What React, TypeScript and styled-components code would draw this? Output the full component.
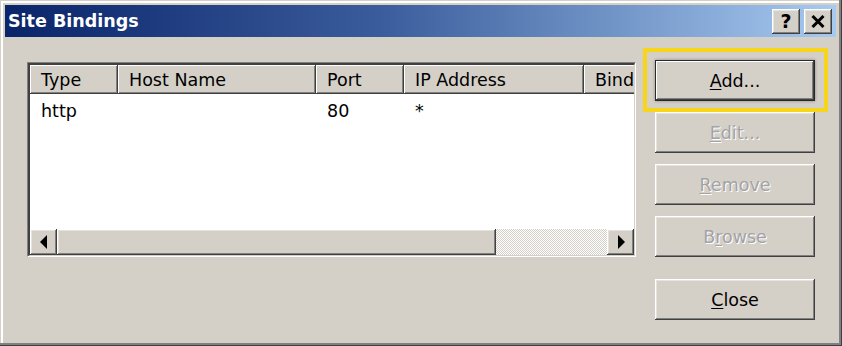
import React from 'react';
import styled, { createGlobalStyle, css } from 'styled-components';

const Global = createGlobalStyle`
  html, body { margin: 0; padding: 0; width: 842px; height: 346px; overflow: hidden; background: #d4d0c8; }
  #root { width: 842px; height: 346px; }
`;

const FONT = `"DejaVu Sans", Tahoma, Verdana, sans-serif`;

const raised = css`
  box-shadow: inset -1px -1px 0 #404040, inset 1px 1px 0 #ffffff, inset -2px -2px 0 #808080, inset 2px 2px 0 #e6e3dc;
`;

const Window = styled.div`
  box-sizing: border-box;
  width: 842px;
  height: 346px;
  background: #d4d0c8;
  padding: 5px 6px 6px 5px;
  display: flex;
  flex-direction: column;
  font-family: ${FONT};
  box-shadow: inset -1px -1px 0 #404040, inset -3px -3px 0 #808080, inset 1px 1px 0 #d4d0c8, inset 3px 3px 0 #ffffff;
`;

const TitleBar = styled.div`
  height: 32px;
  flex-shrink: 0;
  display: flex;
  align-items: center;
  justify-content: space-between;
  padding: 0 4px 0 3px;
  background: linear-gradient(to right, #0a246a 0%, #3a5c9c 45%, #a6caf0 100%);
`;

const Title = styled.span`
  color: #ffffff;
  font-weight: bold;
  font-size: 17.5px;
`;

const CaptionButtons = styled.div`
  display: flex;
  gap: 4px;
`;

const CaptionButton = styled.div`
  width: 28px;
  height: 25px;
  background: #d4d0c8;
  display: flex;
  align-items: center;
  justify-content: center;
  color: #000;
  font-weight: bold;
  font-size: 19px;
  ${raised}
`;

const Body = styled.div`
  flex: 1;
  display: flex;
  align-items: flex-start;
  gap: 19px;
  padding: 23px 21px 0 22px;
`;

const ListFrame = styled.div`
  box-sizing: border-box;
  width: 609px;
  height: 195px;
  margin-top: 2px;
  border-style: solid;
  border-width: 1px;
  border-color: #808080 #ffffff #ffffff #808080;
  display: flex;
`;

const ListInner = styled.div`
  flex: 1;
  display: flex;
  flex-direction: column;
  overflow: hidden;
  background: #ffffff;
  border-style: solid;
  border-width: 2px 1px 1px 2px;
  border-color: #404040 #d4d0c8 #d4d0c8 #404040;
`;

const HeaderRow = styled.div`
  display: flex;
  height: 29px;
  flex-shrink: 0;
  background: #d4d0c8;
`;

const HeaderCell = styled.div<{ $w: number }>`
  box-sizing: border-box;
  width: ${(p) => p.$w}px;
  flex-shrink: 0;
  padding-left: 11px;
  display: flex;
  align-items: center;
  font-size: 17.5px;
  color: #000;
  white-space: nowrap;
  overflow: hidden;
  box-shadow: inset -1px -1px 0 #404040, inset 1px 1px 0 #ffffff, inset -2px -2px 0 #808080;
`;

const Rows = styled.div`
  flex: 1;
  background: #ffffff;
`;

const Row = styled.div`
  display: flex;
  padding-top: 6px;
  height: 22px;
`;

const Cell = styled.div<{ $w: number }>`
  box-sizing: border-box;
  width: ${(p) => p.$w}px;
  flex-shrink: 0;
  padding-left: 11px;
  font-size: 17.5px;
  line-height: 22px;
  color: #000;
  white-space: nowrap;
`;

const ScrollBar = styled.div`
  display: flex;
  height: 26px;
  flex-shrink: 0;
`;

const ScrollButton = styled.div`
  width: 27px;
  flex-shrink: 0;
  background: #d4d0c8;
  display: flex;
  align-items: center;
  justify-content: center;
  ${raised}
`;

const Thumb = styled.div<{ $w: number }>`
  width: ${(p) => p.$w}px;
  flex-shrink: 0;
  background: #d4d0c8;
  ${raised}
`;

const Track = styled.div`
  flex: 1;
  background-color: #ffffff;
  background-image: repeating-conic-gradient(#d4d0c8 0% 25%, #ffffff 0% 50%);
  background-size: 2px 2px;
`;

const ButtonColumn = styled.div`
  width: 160px;
  display: flex;
  flex-direction: column;
  gap: 11px;
`;

const HighlightBox = styled.div`
  padding: 8px 9px 7px 8px;
  margin: -12px -13px -11px -12px;
  border: 4px solid #f6d51a;
  display: flex;
  flex-direction: column;
`;

const Button = styled.div<{ $disabled?: boolean; $default?: boolean; $gapAbove?: number }>`
  box-sizing: border-box;
  height: 41px;
  background: #d4d0c8;
  display: flex;
  align-items: center;
  justify-content: center;
  font-size: 17.5px;
  white-space: nowrap;
  color: ${(p) => (p.$disabled ? '#a3a2a6' : '#000')};
  text-shadow: ${(p) => (p.$disabled ? '1px 1px 0 #ffffff' : 'none')};
  margin-top: ${(p) => p.$gapAbove ?? 0}px;
  ${raised}
  ${(p) =>
    p.$default &&
    css`
      border: 1px solid #2a2a2a;
      box-shadow: inset -1px -1px 0 #404040, inset 1px 1px 0 #ffffff, inset -2px -2px 0 #808080, 0 0 3px rgba(0, 0, 0, 0.35);
    `}
`;

const Label = styled.span`
  display: inline-block;
  white-space: nowrap;
  &::first-letter {
    text-decoration: underline;
    text-decoration-thickness: 1px;
    text-underline-offset: 2px;
  }
`;

const AccessKey = styled.span`
  text-decoration: underline;
  text-decoration-thickness: 1px;
  text-underline-offset: 2px;
`;

const PlainLabel = styled.span`
  white-space: nowrap;
`;

const cols = [88, 198, 88, 180, 120];
const headers = ['Type', 'Host Name', 'Port', 'IP Address', 'Binding Information'];
const row = ['http', '', '80', '*', ''];

const Arrow = ({ dir }: { dir: 'left' | 'right' }) => (
  <svg width="8" height="14" viewBox="0 0 8 14">
    {dir === 'left' ? <polygon points="7,0 7,14 0,7" fill="#000" /> : <polygon points="1,0 1,14 8,7" fill="#000" />}
  </svg>
);

const CloseGlyph = () => (
  <svg width="14" height="13" viewBox="0 0 14 13">
    <path d="M1.5 1 L12.5 12 M12.5 1 L1.5 12" stroke="#000" strokeWidth="3" />
  </svg>
);

export default function App() {
  return (
    <>
      <Global />
      <Window>
        <TitleBar>
          <Title>Site Bindings</Title>
          <CaptionButtons>
            <CaptionButton>?</CaptionButton>
            <CaptionButton>
              <CloseGlyph />
            </CaptionButton>
          </CaptionButtons>
        </TitleBar>
        <Body>
          <ListFrame>
            <ListInner>
              <HeaderRow>
                {headers.map((h, i) => (
                  <HeaderCell key={h} $w={cols[i]}>
                    {h}
                  </HeaderCell>
                ))}
              </HeaderRow>
              <Rows>
                <Row>
                  {row.map((c, i) => (
                    <Cell key={i} $w={cols[i]}>
                      {c}
                    </Cell>
                  ))}
                </Row>
              </Rows>
              <ScrollBar>
                <ScrollButton>
                  <Arrow dir="left" />
                </ScrollButton>
                <Thumb $w={439} />
                <Track />
                <ScrollButton>
                  <Arrow dir="right" />
                </ScrollButton>
              </ScrollBar>
            </ListInner>
          </ListFrame>
          <ButtonColumn>
            <HighlightBox>
              <Button $default>
                <Label>Add...</Label>
              </Button>
            </HighlightBox>
            <Button $disabled>
              <Label>Edit...</Label>
            </Button>
            <Button $disabled>
              <Label>Remove</Label>
            </Button>
            <Button $disabled>
              <PlainLabel>B<AccessKey>r</AccessKey>owse</PlainLabel>
            </Button>
            <Button $gapAbove={11}>
              <Label>Close</Label>
            </Button>
          </ButtonColumn>
        </Body>
      </Window>
    </>
  );
}
